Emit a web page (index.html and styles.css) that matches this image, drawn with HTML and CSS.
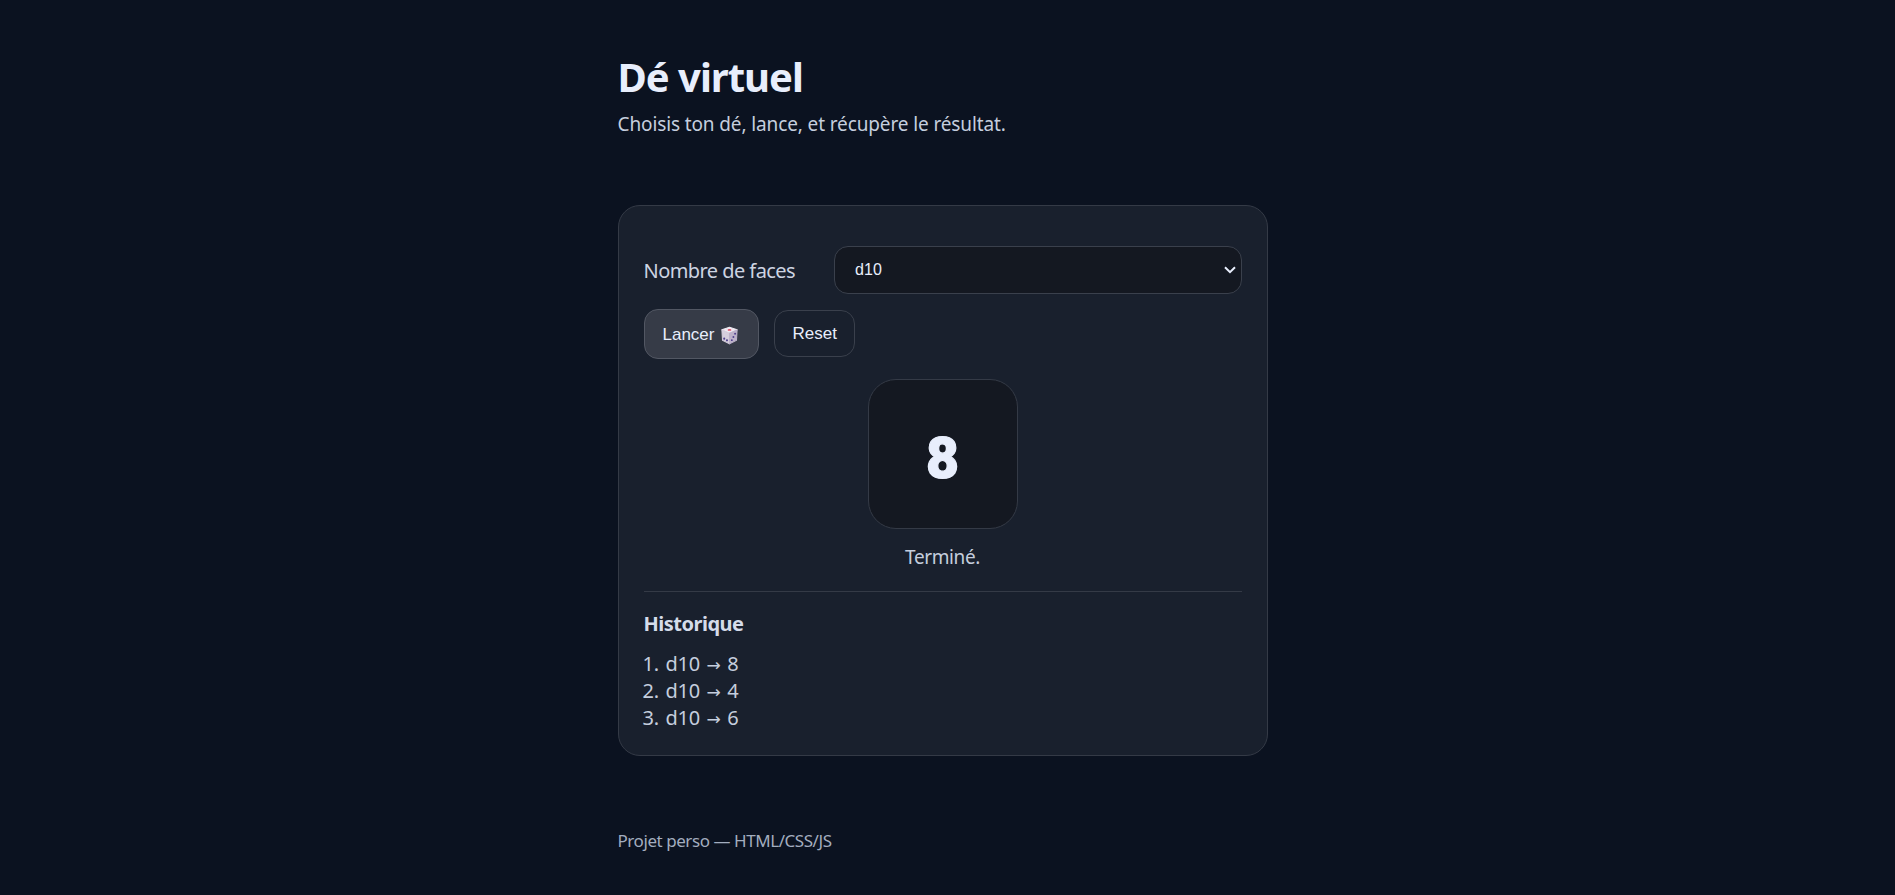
FILE: index.html
```html
<!DOCTYPE html>
<html lang="fr">
<head>
  <meta charset="utf-8">
  <title>Dé virtuel</title>
  <link rel="stylesheet" href="styles.css">
</head>
<body>
  <main class="container">
    <header class="header">
      <h1>Dé virtuel</h1>
      <p class="subtitle">Choisis ton dé, lance, et récupère le résultat.</p>
    </header>

    <section class="card">
      <div class="row">
        <label for="faces">Nombre de faces</label>
        <select id="faces">
          <option>d4</option>
          <option>d6</option>
          <option selected>d10</option>
          <option>d20</option>
        </select>
      </div>

      <div class="actions">
        <button class="btn btn-primary" type="button">Lancer
          <svg class="die" viewBox="0 0 18 18" width="19" height="19" aria-hidden="true">
            <path d="M9 1.2 L16.2 3.6 L9 6.6 L1.8 3.6 Z" fill="#efe9f2" stroke="#efe9f2" stroke-linejoin="round"/>
            <path d="M1.8 3.8 L9 6.8 L9 16.8 L2.4 13.6 Z" fill="#d6cedd" stroke="#d6cedd" stroke-linejoin="round"/>
            <path d="M16.2 3.8 L9 6.8 L9 16.8 L15.6 13.6 Z" fill="#bdb2ca" stroke="#bdb2ca" stroke-linejoin="round"/>
            <ellipse cx="9" cy="3.7" rx="1.8" ry="0.9" fill="#e0526a"/>
            <circle cx="4" cy="12" r="1" fill="#4f3f8c"/>
            <circle cx="6.6" cy="13.6" r="1" fill="#4f3f8c"/>
            <circle cx="11.2" cy="13.4" r="0.9" fill="#4f3f8c"/>
            <circle cx="12.7" cy="10.4" r="0.9" fill="#4f3f8c"/>
            <circle cx="14.3" cy="7.4" r="0.9" fill="#4f3f8c"/>
          </svg>
        </button>
        <button class="btn" type="button">Reset</button>
      </div>

      <div class="result">
        <div class="die-face">8</div>
        <p class="status">Terminé.</p>
      </div>

      <hr class="sep">

      <h2>Historique</h2>
      <ol class="history">
        <li>d10 <span class="arrow">→</span> 8</li>
        <li>d10 <span class="arrow">→</span> 4</li>
        <li>d10 <span class="arrow">→</span> 6</li>
      </ol>
    </section>

    <footer class="footer">Projet perso — HTML/CSS/JS</footer>
  </main>
</body>
</html>
```

FILE: styles.css
```css
* {
  box-sizing: border-box;
}

html, body {
  margin: 0;
  height: 100%;
}

body {
  padding-right: 10px;
  background: #0b1220;
  color: #e8eefc;
  font-family: "Noto Sans", "Open Sans", sans-serif;
  overflow: hidden;
}

.container {
  width: 650px;
  margin: 0 auto;
  padding-top: 49px;
}

h1 {
  margin: 0;
  font-size: 40px;
  line-height: 56px;
  font-weight: 700;
  letter-spacing: -1px;
}

.subtitle {
  margin: 6px 0 0;
  font-size: 19px;
  line-height: 26px;
  color: #c5cede;
  letter-spacing: -0.12px;
}

.card {
  margin-top: 68px;
  height: 551px;
  padding: 40px 25px 0;
  background: #19202d;
  border: 1px solid #343a46;
  border-radius: 22px;
}

.row {
  display: flex;
  align-items: center;
  gap: 39px;
}

label {
  font-size: 20px;
  color: #cdd4e2;
  letter-spacing: -0.56px;
  white-space: nowrap;
}

select {
  flex: 1;
  height: 48px;
  padding: 0 20px 2px;
  appearance: none;
  background: #141821 url("data:image/svg+xml,%3Csvg xmlns='http://www.w3.org/2000/svg' width='12' height='8'%3E%3Cpath d='M1 1.2l5 5 5-5' fill='none' stroke='%23e8eefc' stroke-width='2'/%3E%3C/svg%3E") no-repeat right 5px center;
  color: #e8eefc;
  border: 1px solid #3a404c;
  border-radius: 14px;
  font-family: "Liberation Sans", Arial, sans-serif;
  font-size: 16px;
}

.actions {
  display: flex;
  align-items: center;
  gap: 15px;
  margin-top: 15px;
}

.btn {
  height: 47px;
  padding: 1px 17px 0;
  background: #19202d;
  color: #e8eefc;
  border: 1px solid #3a404c;
  border-radius: 14px;
  font-family: "Liberation Sans", Arial, sans-serif;
  font-size: 17px;
}

.btn-primary {
  display: flex;
  align-items: center;
  gap: 6px;
  height: 50px;
  padding: 2px 19px 0 18px;
  background: #363b47;
  border-color: #525763;
}

.btn:not(.btn-primary) {
  margin-bottom: 2px;
}

.result {
  display: flex;
  flex-direction: column;
  align-items: center;
  margin-top: 20px;
}

.die-face {
  display: flex;
  align-items: center;
  justify-content: center;
  width: 150px;
  height: 150px;
  padding-top: 8px;
  background: #141821;
  border: 1px solid #343a46;
  border-radius: 28px;
  font-family: Roboto, sans-serif;
  font-size: 57px;
  font-weight: 900;
  -webkit-text-stroke: 1.2px #e8eefc;
}

.status {
  margin: 15px 0 0;
  font-size: 19px;
  line-height: 26px;
  color: #c5cede;
  letter-spacing: -0.4px;
}

.sep {
  margin: 21px 0 0;
  border: 0;
  border-top: 1px solid #343a46;
}

h2 {
  margin: 18px 0 0;
  font-size: 20px;
  line-height: 27px;
  font-weight: 700;
  color: #d5dcea;
  letter-spacing: -0.5px;
}

.history {
  margin: 13px 0 0;
  padding-left: 22px;
  font-size: 20px;
  line-height: 27px;
  color: #c5cede;
  letter-spacing: -0.3px;
  word-spacing: 1.8px;
}

.arrow {
  font-family: "DejaVu Sans", sans-serif;
  font-size: 17px;
  line-height: 0;
}

.footer {
  margin-top: 73px;
  font-size: 17px;
  line-height: 24px;
  color: #a3adbf;
  letter-spacing: -0.44px;
}
```
